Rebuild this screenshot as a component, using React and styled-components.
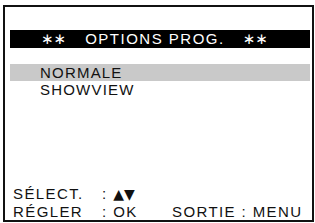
import React from "react"
import styled, { createGlobalStyle } from "styled-components"

const GlobalStyle = createGlobalStyle`
  html, body {
    margin: 0;
    padding: 0;
    background: #fff;
  }
  body {
    font-family: "Liberation Sans", Arial, sans-serif;
  }
`

const Screen = styled.div`
  box-sizing: border-box;
  width: 311px;
  height: 217px;
  margin: 5px 1px 1px 3px;
  border: 2px solid #111;
  display: flex;
  flex-direction: column;
  color: #111;
`

const TitleBar = styled.div`
  margin: 23px 2px 0 5px;
  height: 18px;
  background: #000;
  color: #fff;
  display: flex;
  align-items: center;
  padding-left: 31px;
  font-size: 15px;
  letter-spacing: 1.5px;
  line-height: 18px;
  white-space: pre;
`

const Stars = styled.span`
  font-family: "DejaVu Sans", sans-serif;
  font-size: 15px;
  letter-spacing: 0;
  margin: ${(p) => (p.$right ? "0 0 0 18px" : "0 19px 0 0")};
`

const MenuList = styled.div`
  margin: 16px 2px 0 5px;
  display: flex;
  flex-direction: column;
`

const MenuItem = styled.div`
  height: 17px;
  line-height: 18px;
  padding-left: 30px;
  font-size: 15px;
  letter-spacing: 1.2px;
  background: ${(p) => (p.$active ? "#c9c9c9" : "transparent")};
`

const Footer = styled.div`
  margin-top: auto;
  padding-left: 8px;
  display: flex;
  flex-direction: column;
  font-size: 15px;
  letter-spacing: 1.4px;
`

const FooterRow = styled.div`
  display: flex;
  align-items: baseline;
  line-height: 17px;
  white-space: pre;
`

const Label = styled.span`
  width: 89px;
`

const Hint = styled.span`
  width: ${(p) => p.$w || "auto"};
`

const Arrows = styled.span`
  font-family: "DejaVu Sans", sans-serif;
  font-size: 14px;
  letter-spacing: 0;
`

export default function App() {
  return (
    <>
      <GlobalStyle />
      <Screen>
        <TitleBar>
          <Stars>∗∗</Stars>OPTIONS PROG.<Stars $right>∗∗</Stars>
        </TitleBar>
        <MenuList>
          <MenuItem $active>NORMALE</MenuItem>
          <MenuItem>SHOWVIEW</MenuItem>
        </MenuList>
        <Footer>
          <FooterRow>
            <Label>SÉLECT.</Label>
            <Hint>: <Arrows>▲▼</Arrows></Hint>
          </FooterRow>
          <FooterRow>
            <Label>RÉGLER</Label>
            <Hint $w="70px">: OK</Hint>
            <Hint>SORTIE : MENU</Hint>
          </FooterRow>
        </Footer>
      </Screen>
    </>
  )
}
